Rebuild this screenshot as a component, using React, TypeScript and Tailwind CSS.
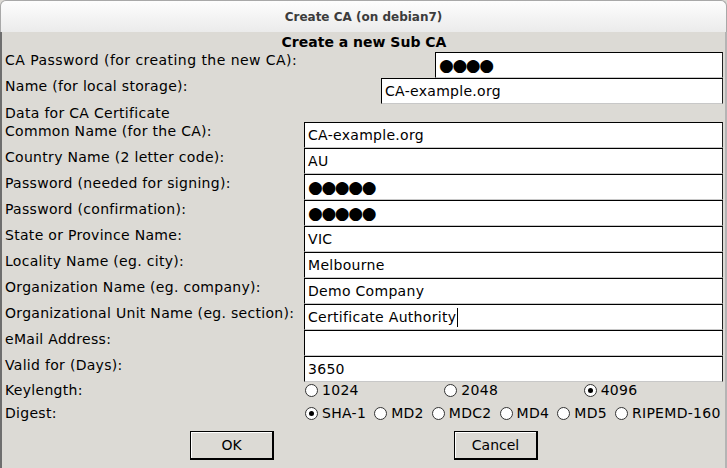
import React from 'react';

const fields: { label: string; value: string; password?: boolean; caret?: boolean }[] = [
  { label: 'Common Name (for the CA):', value: 'CA-example.org' },
  { label: 'Country Name (2 letter code):', value: 'AU' },
  { label: 'Password (needed for signing):', value: '●●●●●', password: true },
  { label: 'Password (confirmation):', value: '●●●●●', password: true },
  { label: 'State or Province Name:', value: 'VIC' },
  { label: 'Locality Name (eg. city):', value: 'Melbourne' },
  { label: 'Organization Name (eg. company):', value: 'Demo Company' },
  { label: 'Organizational Unit Name (eg. section):', value: 'Certificate Authority', caret: true },
  { label: 'eMail Address:', value: '' },
  { label: 'Valid for (Days):', value: '3650' },
];

const Entry = ({ value, password, caret, width }: { value: string; password?: boolean; caret?: boolean; width: string }) => (
  <div
    className={`${width} h-[26px] shrink-0 bg-white border-t border-l border-r border-b border-t-black border-l-black border-r-[#222] border-b-[#c8c8c8] flex items-center pl-[3px] overflow-hidden`}
  >
    {password ? (
      <span className="text-[17px] leading-none tracking-[-1.4px] text-black">{value}</span>
    ) : (
      <span className="text-[14px] leading-[17px] tracking-[0.3px] text-black">{value}</span>
    )}
    {caret && <span className="inline-block w-px h-[19px] bg-black ml-px" />}
  </div>
);

const Radio = ({ checked, label }: { checked?: boolean; label: string }) => (
  <div className="flex items-center gap-[4px]">
    <span className="w-[13px] h-[13px] rounded-full border border-[#333] bg-white flex items-center justify-center">
      {checked && <span className="w-[5px] h-[5px] rounded-full bg-black" />}
    </span>
    <span className="text-[14px] leading-[17px] tracking-[0.3px]">{label}</span>
  </div>
);

const Button = ({ label }: { label: string }) => (
  <button className="w-[84px] h-[29px] border border-black border-r-2 border-b-2 bg-[#dcdad5] text-[14px] leading-none text-black shadow-[inset_1px_1px_0_#ffffff]">
    {label}
  </button>
);

export default function App() {
  return (
    <div className="w-[727px] h-[468px] flex flex-col overflow-hidden bg-[#dcdad5] font-['DejaVu_Sans','Liberation_Sans',sans-serif] text-black">
      <div className="h-[32px] shrink-0 rounded-t-[6px] border border-b-0 border-[#a8a8a8] bg-gradient-to-b from-[#fdfdfd] to-[#ebebeb] flex items-center justify-center">
        <span className="text-[12px] font-bold text-[#3c3c3c]">Create CA (on debian7)</span>
      </div>
      <div className="flex-1 flex flex-col border-l-2 border-l-[#6e6e6e] border-r-2 border-r-[#b4b4b4] pl-[3px] pr-[2px]">
        <div className="h-[20px] flex items-center justify-center">
          <span className="text-[14px] font-bold leading-none">Create a new Sub CA</span>
        </div>
        <div className="h-[26px] flex items-start justify-between">
          <span className="text-[14px] leading-[17px] tracking-[0.45px]">CA Password (for creating the new CA):</span>
          <Entry value="●●●●" password width="w-[288px]" />
        </div>
        <div className="h-[26px] flex items-start justify-between">
          <span className="text-[14px] leading-[17px] tracking-[0.3px]">Name (for local storage):</span>
          <Entry value="CA-example.org" width="w-[342px]" />
        </div>
        <div className="h-[18px] flex items-start">
          <span className="text-[14px] leading-[17px] tracking-[0.3px] pt-px">Data for CA Certificate</span>
        </div>
        {fields.map((f) => (
          <div key={f.label} className="h-[26px] flex items-start justify-between">
            <span className="text-[14px] leading-[17px] tracking-[0.3px] pt-px">{f.label}</span>
            <Entry value={f.value} password={f.password} caret={f.caret} width="w-[419px]" />
          </div>
        ))}
        <div className="h-[23px] flex items-start justify-between">
          <span className="text-[14px] leading-[17px] tracking-[0.3px]">Keylength:</span>
          <div className="w-[420px] grid grid-cols-3 pl-[2px]">
            <Radio label="1024" />
            <Radio label="2048" />
            <Radio checked label="4096" />
          </div>
        </div>
        <div className="h-[24px] flex items-start justify-between">
          <span className="text-[14px] leading-[17px] tracking-[0.3px]">Digest:</span>
          <div className="w-[420px] flex pl-[2px] gap-[8px]">
            <Radio checked label="SHA-1" />
            <Radio label="MD2" />
            <Radio label="MDC2" />
            <Radio label="MD4" />
            <Radio label="MD5" />
            <Radio label="RIPEMD-160" />
          </div>
        </div>
        <div className="flex justify-center gap-[180px] pt-[2px]">
          <Button label="OK" />
          <Button label="Cancel" />
        </div>
      </div>
    </div>
  );
}
